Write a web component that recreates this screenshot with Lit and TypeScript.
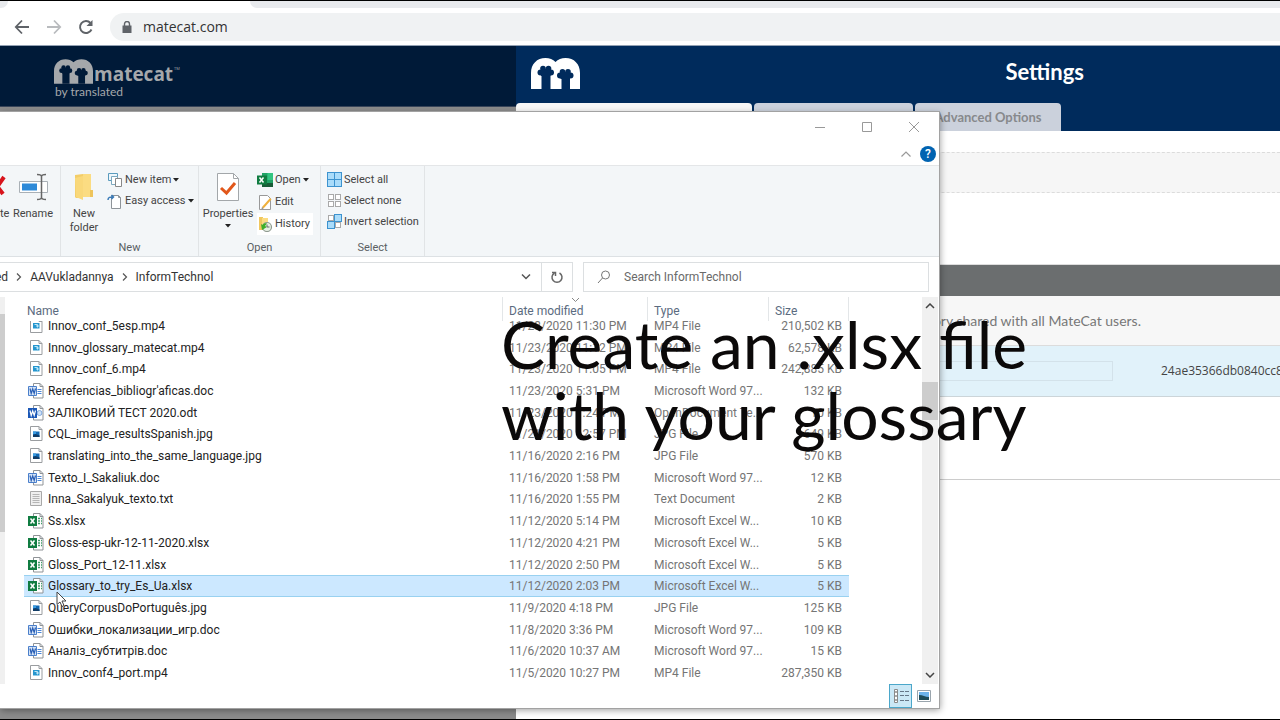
import { LitElement, html, css, svg } from "lit";
import { customElement } from "lit/decorators.js";
import { classMap } from "lit/directives/class-map.js";

type Kind = "mp4" | "doc" | "odt" | "jpg" | "txt" | "xlsx";
interface FileRow { name: string; kind: Kind; date: string; type: string; size: string; selected?: boolean; }

const WORD = "Microsoft Word 97...";
const EXCEL = "Microsoft Excel W...";
const FILES: FileRow[] = [
  { name: "Innov_conf_5esp.mp4", kind: "mp4", date: "11/23/2020 11:30 PM", type: "MP4 File", size: "210,502 KB" },
  { name: "Innov_glossary_matecat.mp4", kind: "mp4", date: "11/23/2020 11:12 PM", type: "MP4 File", size: "62,578 KB" },
  { name: "Innov_conf_6.mp4", kind: "mp4", date: "11/23/2020 11:05 PM", type: "MP4 File", size: "242,885 KB" },
  { name: "Rerefencias_bibliogr'aficas.doc", kind: "doc", date: "11/23/2020 5:31 PM", type: WORD, size: "132 KB" },
  { name: "ЗАЛІКОВИЙ ТЕСТ 2020.odt", kind: "odt", date: "11/23/2020 1:24 PM", type: "OpenDocument Te...", size: "10 KB" },
  { name: "CQL_image_resultsSpanish.jpg", kind: "jpg", date: "11/21/2020 12:57 PM", type: "JPG File", size: "649 KB" },
  { name: "translating_into_the_same_language.jpg", kind: "jpg", date: "11/16/2020 2:16 PM", type: "JPG File", size: "570 KB" },
  { name: "Texto_I_Sakaliuk.doc", kind: "doc", date: "11/16/2020 1:58 PM", type: WORD, size: "12 KB" },
  { name: "Inna_Sakalyuk_texto.txt", kind: "txt", date: "11/16/2020 1:55 PM", type: "Text Document", size: "2 KB" },
  { name: "Ss.xlsx", kind: "xlsx", date: "11/12/2020 5:14 PM", type: EXCEL, size: "10 KB" },
  { name: "Gloss-esp-ukr-12-11-2020.xlsx", kind: "xlsx", date: "11/12/2020 4:21 PM", type: EXCEL, size: "5 KB" },
  { name: "Gloss_Port_12-11.xlsx", kind: "xlsx", date: "11/12/2020 2:50 PM", type: EXCEL, size: "5 KB" },
  { name: "Glossary_to_try_Es_Ua.xlsx", kind: "xlsx", date: "11/12/2020 2:03 PM", type: EXCEL, size: "5 KB", selected: true },
  { name: "QueryCorpusDoPortuguês.jpg", kind: "jpg", date: "11/9/2020 4:18 PM", type: "JPG File", size: "125 KB" },
  { name: "Ошибки_локализации_игр.doc", kind: "doc", date: "11/8/2020 3:36 PM", type: WORD, size: "109 KB" },
  { name: "Аналіз_субтитрів.doc", kind: "doc", date: "11/6/2020 10:37 AM", type: WORD, size: "15 KB" },
  { name: "Innov_conf4_port.mp4", kind: "mp4", date: "11/5/2020 10:27 PM", type: "MP4 File", size: "287,350 KB" },
];

const icon = (w: number, h: number, body: unknown) =>
  html`<svg width=${w} height=${h} viewBox="0 0 ${w} ${h}" fill="none" aria-hidden="true">${body}</svg>`;

const sheet = svg`<path d="M2.5.5H11l3 3v11H2.5z" fill="#fff" stroke="#9a9da0"/><path d="M11 .5v3h3" stroke="#9a9da0"/>`;
const officeSheet = svg`<path d="M5.500.5H12l3 3v11.500H5.500z" fill="#fff" stroke="#8f9397"/><path d="M12 .5v3h3" stroke="#8f9397"/>`;

const xLines = svg`<path d="M2.500 5.500l4 5M6.500 5.500l-4 5" stroke="#fff" stroke-width="1.500"/>`;
const wLines = svg`<path d="M2 5.500l1.200 5L4.700 6l1.500 4.500 1.300-5" stroke-width="1.200"/>`;

const fileIcon = (kind: Kind) => {
  const bodies: Record<Kind, unknown> = {
    mp4: svg`${sheet}<path d="M5 5h6.500v5.500H5z" fill="#2596cf"/><path d="M6.500 6.500h3v3M8 8h3" stroke="#bde6f7"/>`,
    jpg: svg`${sheet}<path d="M5 5.500h6.500V11H5z" fill="#1268b3"/><path d="M5 9l2.500-1 4 1.500V11H5z" fill="#123c66"/><path d="M5 5.500h3V8H5z" fill="#3b9be0"/>`,
    txt: svg`<path d="M2.500.5h11v14h-11z" fill="#efefef" stroke="#a8a8a8"/><path d="M4.500 3.500h7M4.500 5.500h7M4.500 7.500h7M4.500 9.500h7M4.500 11.500h7" stroke="#b5b5b5"/>`,
    doc: svg`${officeSheet}<path d="M9.500 6.500h4M9.500 8.500h4M9.500 10.500h4" stroke="#4a86d8"/><path d="M.5 3.500h8v9h-8z" fill="#d5e4f7" stroke="#4a7fcb"/><g stroke="#2a5fb5">${wLines}</g>`,
    odt: svg`${officeSheet}<circle cx="11.500" cy="8" r="2.500" fill="#cfe1f6" stroke="#7fa9df"/><path d="M0 3h9v10H0z" fill="#1c58b7"/><g stroke="#fff">${wLines}</g>`,
    xlsx: svg`${officeSheet}<path d="M10 5.500h4M10 8h4M10 10.500h4" stroke="#3f9c68" stroke-width="1.500" stroke-dasharray="2 1"/><path d="M0 3h9v10H0z" fill="#107c41"/>${xLines}`,
  };
  return icon(16, 16, bodies[kind]);
};

const caret = html`<svg class="caret" width="6" height="4" viewBox="0 0 6 4" aria-hidden="true"><path d="M0 0h6L3 3.500z" fill="#222"/></svg>`;
const crumbSep = icon(6, 8, svg`<path d="M1 .5L4.500 4 1 7.500" stroke="#555" stroke-width="1.200"/>`);

/* Arched letter m with two raised cat paws cut out of it. */
const pawLogo = (w: number, h: number, ink: string, ground: string) => html`
  <svg width=${w} height=${h} viewBox="0 0 49 31" aria-hidden="true">
    <path fill=${ink} d="M0 31V15C0 6 6 0 14.500 0c4 0 7.500 1.500 10 4C27 1.500 30.500 0 34.500 0 43 0 49 6 49 15v16z"/>
    <g fill=${ground}>
      <path d="M10.500 16h9v15h-9zM30.500 20H39v11h-8.500z"/>
      <circle cx="9.500" cy="14.500" r="3"/><circle cx="12" cy="10.500" r="2.800"/><circle cx="17.500" cy="10.500" r="2.800"/><circle cx="20" cy="14.500" r="3"/>
      <path d="M10 11h9.500v7H10z"/>
      <circle cx="29" cy="17.500" r="3"/><circle cx="31.500" cy="13.800" r="2.800"/><circle cx="37" cy="13.800" r="2.800"/><circle cx="39.500" cy="17.500" r="3"/>
      <path d="M29.500 14H39v7h-9.500z"/>
    </g>
  </svg>`;

@customElement("explorer-window")
export class ExplorerWindow extends LitElement {
  static styles = css`
    :host { display: flex; flex-direction: column; background: #fff; color: #333; font: 12px/16px Roboto, "Open Sans", sans-serif; box-shadow: 0 0 0 1px #a2a2a2, 1px 2px 7px rgba(0,0,0,.4); overflow: hidden; }
    * { box-sizing: border-box; }
    button { font: inherit; color: inherit; background: none; border: 0; padding: 0; margin: 0; display: flex; align-items: center; }
    svg { display: block; flex: none; }
    .title { display: flex; justify-content: flex-end; height: 30px; padding-right: 2px; }
    .title button { width: 47px; justify-content: center; }
    .tools { display: flex; justify-content: flex-end; align-items: center; gap: 8px; height: 23px; padding-right: 3px; }
    .help { width: 16px; height: 16px; border-radius: 8px; background: #0063b1; color: #fff; justify-content: center; font-weight: 500; }
    .ribbon { display: flex; height: 92px; background: #f3f6f8; border-top: 1px solid #e4e6e8; border-bottom: 1px solid #dde1e4; font-size: 11px; color: #444; }
    .group { display: flex; flex-direction: column; justify-content: space-between; border-right: 1px solid #e1e4e6; padding-top: 3px; }
    .edit { width: 61px; }
    .new { width: 138px; }
    .open { width: 122px; }
    .select { width: 104px; }
    .items { display: flex; }
    .group-name { text-align: center; color: #5a5f63; }
    .tall { flex: none; flex-direction: column; line-height: 14px; text-align: center; }
    .tall svg { margin: 1px 0 5px; }
    .tall .caret { margin: 3px 0 0; }
    .cut { width: 10px; align-items: flex-start; }
    .rename { width: 46px; }
    .folder { width: 46px; }
    .props { width: 58px; }
    .col { display: flex; flex-direction: column; }
    .col button { height: 21px; gap: 2px; white-space: nowrap; }
    .open .col button { height: 22px; gap: 2px; padding-right: 3px; }
    .open .col .lit { background: #fff; }
    .select .col { padding-left: 6px; }
    .path { display: flex; padding: 5px 10px 5px 0; height: 40px; gap: 10px; }
    .address, .search { border: 1px solid #dcdfe1; display: flex; align-items: center; background: #fff; height: 30px; }
    .address { flex: 1; border-left: 0; overflow: hidden; }
    .crumbs { display: flex; align-items: center; gap: 8px; flex: 1; margin-left: -5px; }
    .drop { width: 30px; height: 28px; justify-content: center; }
    .refresh { width: 31px; height: 28px; justify-content: center; border-left: 1px solid #dcdfe1; }
    .search { flex: none; width: 346px; padding-left: 13px; gap: 13px; }
    .search input { flex: 1; min-width: 0; border: 0; outline: 0; padding: 0; background: none; font: inherit; color: #333; }
    .search input::placeholder { color: #6a6a6a; opacity: 1; }
    .body { display: flex; flex: 1; min-height: 0; }
    .bar { background: #f0f0f0; display: flex; flex-direction: column; align-items: center; }
    .nav { width: 5px; margin-right: 19px; }
    .nav .thumb { width: 5px; margin-top: 17px; height: 218px; background: #cdcdcd; }
    .right { width: 16px; margin-right: 1px; justify-content: space-between; padding: 6px 0; }
    .right .thumb { width: 16px; height: 38px; background: #cdcdcd; }
    .track { flex: 1; display: flex; flex-direction: column; }
    .before { flex: 71; }
    .after { flex: 246; }
    .list { flex: 1; min-width: 0; overflow: hidden; padding-right: 73px; }
    table { border-collapse: separate; border-spacing: 0; width: 100%; height: calc(100% + 6px); margin-top: -6px; table-layout: fixed; }
    th { position: sticky; top: 0; background: #fff; height: 24px; padding: 3px 0 0 6px; font-weight: 400; text-align: left; color: #5b6b80; border-left: 1px solid #e3e6e8; line-height: 20px; z-index: 1; }
    th:first-child { border-left: 0; padding-left: 3px; }
    th:last-child { border-right: 1px solid #e3e6e8; }
    .c-date { width: 145px; }
    .c-type { width: 121px; }
    .c-size { width: 81px; }
    .sort { position: absolute; left: 68px; top: 0; }
    td { padding: 0 0 0 7px; line-height: 16px; white-space: nowrap; color: #757575; border: 0 solid transparent; border-width: 1px 0; }
    td:first-child { padding-left: 4px; color: #222; }
    td:last-child { text-align: right; padding-right: 7px; }
    .file { display: flex; align-items: center; gap: 4px; }
    .on td { background: #cce8ff; border-color: #99d1f0; }
    .foot { display: flex; justify-content: flex-end; height: 24px; padding-right: 4px; }
    .foot button { width: 23px; justify-content: center; }
    .foot .on { background: #cbe8f6; border: 1px solid #4ba7ca; }
  `;

  render() {
    return html`
      <div class="title">
        <button aria-label="Minimize">${icon(12, 12, svg`<path d="M1 6.500h10" stroke="#999"/>`)}</button>
        <button aria-label="Maximize">${icon(12, 12, svg`<path d="M1.500 1.500h9v9h-9z" stroke="#999"/>`)}</button>
        <button aria-label="Close">${icon(12, 12, svg`<path d="M1 1l10 10M11 1L1 11" stroke="#999"/>`)}</button>
      </div>
      <div class="tools">
        <button aria-label="Collapse ribbon">${icon(12, 8, svg`<path d="M1.500 6.500L6 2l4.500 4.500" stroke="#999" stroke-width="1.200"/>`)}</button>
        <button class="help" aria-label="Help">?</button>
      </div>
      <div class="ribbon">
        <div class="group edit">
          <div class="items">
            <button class="tall cut">${icon(6, 32, svg`<path d="M-9 8L3 24M4 7L-8 24" stroke="#d8141c" stroke-width="4"/>`)}te</button>
            <button class="tall rename">${icon(32, 32, svg`<path d="M2.500 11.500h28v11h-28z" fill="#fff" stroke="#a9b0b6"/><path d="M5 13.500h15v7H5z" fill="#2e8ad8"/><path d="M24.500 6v22M20 4.500c3 0 4.500.5 4.500 2 0-1.500 1.500-2 4.500-2M20 29.500c3 0 4.500-.5 4.500-2 0 1.500 1.500 2 4.500 2" stroke="#666" stroke-width="1.500"/>`)}Rename</button>
          </div>
        </div>
        <div class="group new">
          <div class="items">
            <button class="tall folder">${icon(32, 32, svg`<path d="M7 5l8-1v24H8l-1-1z" fill="#f3cd68"/><path d="M15 4h8v23h-8z" fill="#fbdc82"/><path d="M7 8l8-2v24l-7-3z" fill="#f9d87a"/><path d="M22 20h3v7h-3z" fill="#eec45c"/>`)}New<br>folder</button>
            <div class="col">
              <button>${icon(16, 16, svg`<path d="M1.500 1.500h9v7h-9z" fill="#eef6fb" stroke="#5a9bbd"/><path d="M4.500 4.500h6v8h-6z" fill="#fff" stroke="#7ca9bf"/><path d="M8.500 6.500h6v8h-6z" fill="#fff" stroke="#888"/>`)}New item ${caret}</button>
              <button>${icon(16, 16, svg`<path d="M4.500 2.500h7l2 2v11h-9z" fill="#fff" stroke="#8e9499"/><path d="M11.500 2.500v2h2" stroke="#8e9499"/><path d="M1 7c0-3 2-3 5-3M4.500 2l2 2-2 2" stroke="#3b7bb8" stroke-width="1.500"/>`)}Easy access ${caret}</button>
            </div>
          </div>
          <div class="group-name">New</div>
        </div>
        <div class="group open">
          <div class="items">
            <button class="tall props">${icon(32, 32, svg`<path d="M5.500 3.500h16l5 5v22h-21z" fill="#fff" stroke="#a3a7aa"/><path d="M21.500 3.500v5h5" stroke="#a3a7aa"/><path d="M9 18l5.500 5L23 13" stroke="#e1571b" stroke-width="3"/>`)}Properties${caret}</button>
            <div class="col">
              <button>${icon(16, 16, svg`<path d="M5 1h11v14H5z" fill="#21a366"/><path d="M10.500 1H16v7h-5.500z" fill="#33c481"/><path d="M5 11h11v4H5z" fill="#185c37"/><path d="M0 3.500h10v9H0z" fill="#107c41"/>${xLines}`)}Open ${caret}</button>
              <button>${icon(16, 16, svg`<path d="M2.500 1.500h8l3 3v11h-11z" fill="#fff" stroke="#999"/><path d="M5 13l8-9 1.500 1.500-8 9z" fill="#efb03c"/><path d="M5 13l-.5 2 2-.5z" fill="#777"/>`)}Edit</button>
              <button class="lit">${icon(16, 16, svg`<path d="M2 1h4v13H2z" fill="#f0c75e"/><path d="M5 2h6v10H5z" fill="#fbdc82"/><circle cx="10" cy="11" r="4.500" fill="#e7f0e4" stroke="#909a90" stroke-width="1.200"/><path d="M10 8.500V11h2.500" stroke="#666"/><path d="M4 8l1 6 5-3-2-1 2-2.500c-2-.5-3.500 0-4.500 1.500z" fill="#3fae2a"/>`)}History</button>
            </div>
          </div>
          <div class="group-name">Open</div>
        </div>
        <div class="group select">
          <div class="items">
            <div class="col">
              ${this.selectButton("Select all", [true, true, true, true])}
              ${this.selectButton("Select none", [false, false, false, false])}
              ${this.selectButton("Invert selection", [false, true, true, false])}
            </div>
          </div>
          <div class="group-name">Select</div>
        </div>
      </div>
      <div class="path">
        <div class="address">
          <div class="crumbs"><button>ed</button>${crumbSep}<button>AAVukladannya</button>${crumbSep}<button>InformTechnol</button></div>
          <button class="drop" aria-label="Previous locations">${icon(10, 8, svg`<path d="M1 1.500l4 4 4-4" stroke="#555" stroke-width="1.500"/>`)}</button>
          <button class="refresh" aria-label="Refresh">${icon(14, 14, svg`<path d="M4.500 3a5 5 0 1 0 5 0" stroke="#666" stroke-width="1.500"/><path d="M5.500 6V2.500H2" stroke="#666" stroke-width="1.500"/>`)}</button>
        </div>
        <div class="search">
          ${icon(14, 14, svg`<circle cx="8.500" cy="5" r="4" stroke="#777"/><path d="M5.500 8L1 13" stroke="#777"/>`)}
          <input type="text" aria-label="Search InformTechnol" placeholder="Search InformTechnol">
        </div>
      </div>
      <div class="body">
        <div class="bar nav"><div class="thumb"></div></div>
        <div class="list">
          <table>
            <thead><tr>
              <th>Name</th>
              <th class="c-date">Date modified<span class="sort">${icon(9, 6, svg`<path d="M1 1l3.500 3.500L8 1" stroke="#888"/>`)}</span></th>
              <th class="c-type">Type</th><th class="c-size">Size</th>
            </tr></thead>
            <tbody>
              ${FILES.map((f) => html`<tr class=${classMap({ on: !!f.selected })}>
                <td><div class="file">${fileIcon(f.kind)}<span>${f.name}</span></div></td>
                <td>${f.date}</td><td>${f.type}</td><td>${f.size}</td>
              </tr>`)}
            </tbody>
          </table>
        </div>
        <div class="bar right">
          ${icon(10, 6, svg`<path d="M1 5l4-4 4 4" stroke="#444" stroke-width="1.500"/>`)}
          <div class="track"><div class="before"></div><div class="thumb"></div><div class="after"></div></div>
          ${icon(10, 6, svg`<path d="M1 1l4 4 4-4" stroke="#444" stroke-width="1.500"/>`)}
        </div>
      </div>
      <div class="foot">
        <button class="on" aria-label="Details view">${icon(16, 14, svg`<path d="M1.500.5h3v13h-3z" fill="#fff" stroke="#8a8a8a"/><path d="M3 2v10" stroke="#555" stroke-dasharray="2 2"/><path d="M7 2.500h4M7 6.500h4M7 11.500h4M12 2.500h4M12 6.500h4M12 11.500h4" stroke="#678"/>`)}</button>
        <button aria-label="Large icons view">${icon(14, 12, svg`<path d="M.5.5h13v11H.5z" fill="#fff" stroke="#9aa5ad"/><path d="M2 2h10v8H2z" fill="#6db3ea"/><path d="M2 5c4 0 6 2 10 2v3H2z" fill="#1f4c58"/>`)}</button>
      </div>`;
  }

  private selectButton(label: string, cells: boolean[]) {
    const cell = (on: boolean, i: number) => {
      const s = on ? 7 : 5;
      const x = (i % 2) * 7 + (on ? 0.5 : 1.5);
      const y = Math.floor(i / 2) * 7 + (on ? 0.5 : 1.5);
      return svg`<rect x=${x} y=${y} width=${s} height=${s} fill=${on ? "#aadcfa" : "#fff"} stroke=${on ? "#3d93cf" : "#a9a9a9"}/>`;
    };
    return html`<button>${icon(15, 15, cells.map(cell))}${label}</button>`;
  }
}

@customElement("app-root")
export class AppRoot extends LitElement {
  static styles = css`
    :host { display: flex; flex-direction: column; position: relative; min-height: 100vh; box-sizing: border-box; border-top: 1px solid #000; border-bottom: 1px solid #000; background: #fff; font-family: "Open Sans", "Noto Sans", sans-serif; overflow: hidden; }
    * { box-sizing: border-box; }
    svg { display: block; flex: none; }
    button { border: 0; background: none; padding: 0; }
    .tabstrip { display: flex; height: 7px; }
    .tab-prev { width: 8px; background: #e8eaed; border-bottom-right-radius: 7px; }
    .tab-now { width: 242px; }
    .tab-rest { flex: 1; background: #e8eaed; border-bottom-left-radius: 7px; }
    .toolbar { display: flex; align-items: center; height: 37px; padding-left: 14px; gap: 16px; }
    .pill { flex: 1; display: flex; align-items: center; gap: 11px; height: 28px; padding-left: 12px; background: #f0f2f3; border-radius: 14px 0 0 14px; }
    .pill input { flex: 1; border: 0; padding: 0; outline: 0; background: none; font: 14px/20px "Open Sans", sans-serif; color: #333; }
    .page { flex: 1; display: grid; grid-template-columns: minmax(0, 516fr) minmax(0, 764fr); border-top: 1px solid #93a1b3; }
    .dim { background: #8b8b8b; }
    .site-head { background: #001a38; height: 61px; padding: 13px 0 0 54px; border-bottom: 1px solid #38455a; color: #a5a8ab; }
    .brand { display: flex; align-items: flex-end; gap: 1px; height: 25px; }
    .word { font: 700 19px/19px "Open Sans", sans-serif; }
    .tm { font: 4px/30px "Open Sans", sans-serif; }
    .by { font: 12px/14px "Lato", sans-serif; padding-left: 1px; margin-top: 1px; }
    .modal { background: #fff; }
    .modal-head { background: #002b5c; color: #fff; height: 85px; display: flex; flex-direction: column; justify-content: space-between; }
    .modal-top { display: flex; justify-content: space-between; padding: 12px 196px 0 15px; }
    h1 { margin: 0; font: 700 22px/28px "Lato", sans-serif; }
    .tabs { display: flex; gap: 2px; height: 28px; }
    .tabs button { border-radius: 4px 4px 0 0; background: #cbd1dc; color: #87898c; font: 700 13px/28px "Lato", sans-serif; }
    .tabs .first { background: #f7f7f7; width: 236px; }
    .tabs .second { width: 159px; }
    .tabs .third { width: 146px; }
    .notice { margin-top: 21px; height: 41px; background: #f6f6f6; border: 1px dashed #dcdcdc; border-width: 1px 0; }
    .bar { margin-top: 71px; height: 32px; background: #6b6e6f; border-top: 1px solid #ddd; }
    .shared { height: 50px; background: #f7f7f7; border-bottom: 1px solid #dcdcdc; color: #777; font: 14px/50px "Lato", sans-serif; padding-right: 139px; text-align: right; }
    .key { height: 51px; background: #e1f2fa; border-bottom: 1px solid #ccd5d9; display: flex; align-items: center; justify-content: flex-end; gap: 48px; color: #444; font: 12px/16px "Open Sans", sans-serif; }
    .key input { width: 200px; height: 20px; border: 1px solid #d3e2ea; background: none; }
    .hash { width: 119px; white-space: nowrap; }
    .rule { height: 83px; border-bottom: 1px solid #ccc; }
    explorer-window { position: absolute; left: 0; right: 341px; top: 111px; bottom: 11px; }
    .cursor { position: absolute; left: 56px; top: 590px; }
    .caption { position: absolute; left: 501px; top: 307px; margin: 0; color: #0b0909; font: 66px/71px "Lato", sans-serif; white-space: nowrap; }
  `;

  render() {
    return html`
      <div class="tabstrip"><div class="tab-prev"></div><div class="tab-now"></div><div class="tab-rest"></div></div>
      <div class="toolbar">
        <button aria-label="Back">${icon(16, 16, svg`<path d="M15 8H2M8 1.500L1.800 8 8 14.500" stroke="#5f6368" stroke-width="1.800"/>`)}</button>
        <button aria-label="Forward">${icon(16, 16, svg`<path d="M1 8h13M8 1.500L14.200 8 8 14.500" stroke="#b9bbbe" stroke-width="1.800"/>`)}</button>
        <button aria-label="Reload">${icon(16, 16, svg`<path d="M13.500 10.500A6 6 0 1 1 12.500 4" stroke="#5f6368" stroke-width="1.900"/><path d="M14.500 1v6h-6z" fill="#5f6368"/>`)}</button>
        <div class="pill">
          ${icon(10, 12, svg`<path d="M.5 4.500h9V12h-9z" fill="#5f6368"/><path d="M2.500 5V3a2.500 2.500 0 0 1 5 0v2" stroke="#5f6368" stroke-width="1.400"/>`)}
          <input type="text" aria-label="Address" .value=${"matecat.com"}>
        </div>
      </div>
      <div class="page">
        <div class="dim">
          <div class="site-head">
            <div class="brand">${pawLogo(39, 25, "#a5a8ab", "#001a38")}<span class="word">matecat</span><span class="tm">TM</span></div>
            <div class="by">by translated</div>
          </div>
        </div>
        <div class="modal">
          <div class="modal-head">
            <div class="modal-top">${pawLogo(49, 31, "#fff", "#002b5c")}<h1>Settings</h1></div>
            <div class="tabs"><button class="first" aria-label="Translation memory"></button><button class="second" aria-label="Machine translation"></button><button class="third">Advanced Options</button></div>
          </div>
          <div class="notice"></div>
          <div class="bar"></div>
          <div class="shared">ory shared with all MateCat users.</div>
          <div class="key"><input type="text" aria-label="Key description"><span class="hash">24ae35366db0840cc8</span></div>
          <div class="rule"></div>
        </div>
      </div>
      <explorer-window></explorer-window>
      <svg class="cursor" width="12" height="18" viewBox="0 0 12 18" aria-hidden="true"><path d="M1 1v12.500l3-2.500 2 4.500 2-1-2-4.500h4z" fill="#fff" stroke="#444"/></svg>
      <p class="caption">Create an .xlsx file<br>with your glossary</p>`;
  }
}
